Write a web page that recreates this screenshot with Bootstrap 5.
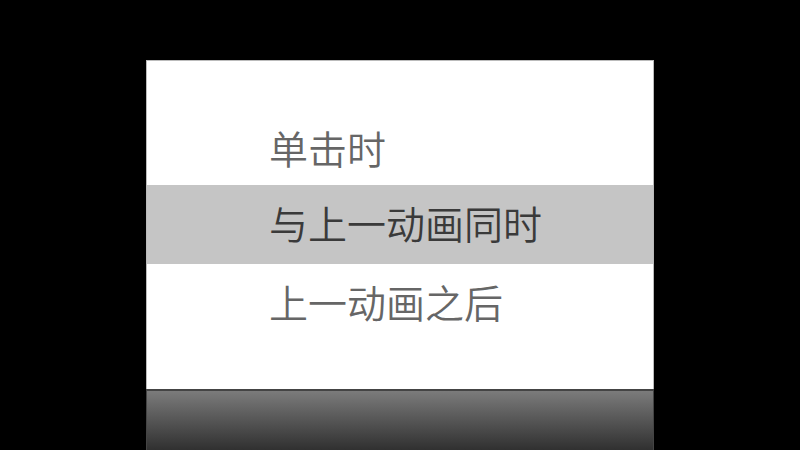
<!DOCTYPE html>
<html lang="zh-CN">
<head>
<meta charset="utf-8">
<meta name="viewport" content="width=device-width, initial-scale=1">
<title>动画开始方式</title>
<link rel="stylesheet" href="https://cdn.jsdelivr.net/npm/bootstrap@5.3.0/dist/css/bootstrap.min.css">
<style>
body { background: #000; font-family: "Noto Sans CJK SC", sans-serif; }
.stage { padding: 60px 146px 0; }
.start-menu { padding: 49px 0 46px; border: 1px solid #bbb; border-bottom: 0; }
.start-option { padding: 0 122px 4px; font-size: 39px; line-height: 75px; font-weight: 350; color: #666; background: transparent; white-space: nowrap; }
.start-option:first-child { padding-bottom: 0; }
.start-option.active { color: #3a3a3a; background: #c5c5c5; }
.reflection { background: linear-gradient(#7b7b7b, #303030); border: 1px solid #444; border-width: 2px 1px 0; }
</style>
<script src="https://cdn.jsdelivr.net/npm/bootstrap@5.3.0/dist/js/bootstrap.bundle.min.js"></script>
</head>
<body>
<main class="stage d-flex flex-column vh-100 overflow-hidden">
  <div class="start-menu bg-white d-flex flex-column" role="menu" aria-label="开始">
    <button type="button" class="start-option border-0 text-start" role="menuitem">单击时</button>
    <button type="button" class="start-option active border-0 text-start" role="menuitem">与上一动画同时</button>
    <button type="button" class="start-option border-0 text-start" role="menuitem">上一动画之后</button>
  </div>
  <div class="reflection flex-grow-1" aria-hidden="true"></div>
</main>
</body>
</html>
